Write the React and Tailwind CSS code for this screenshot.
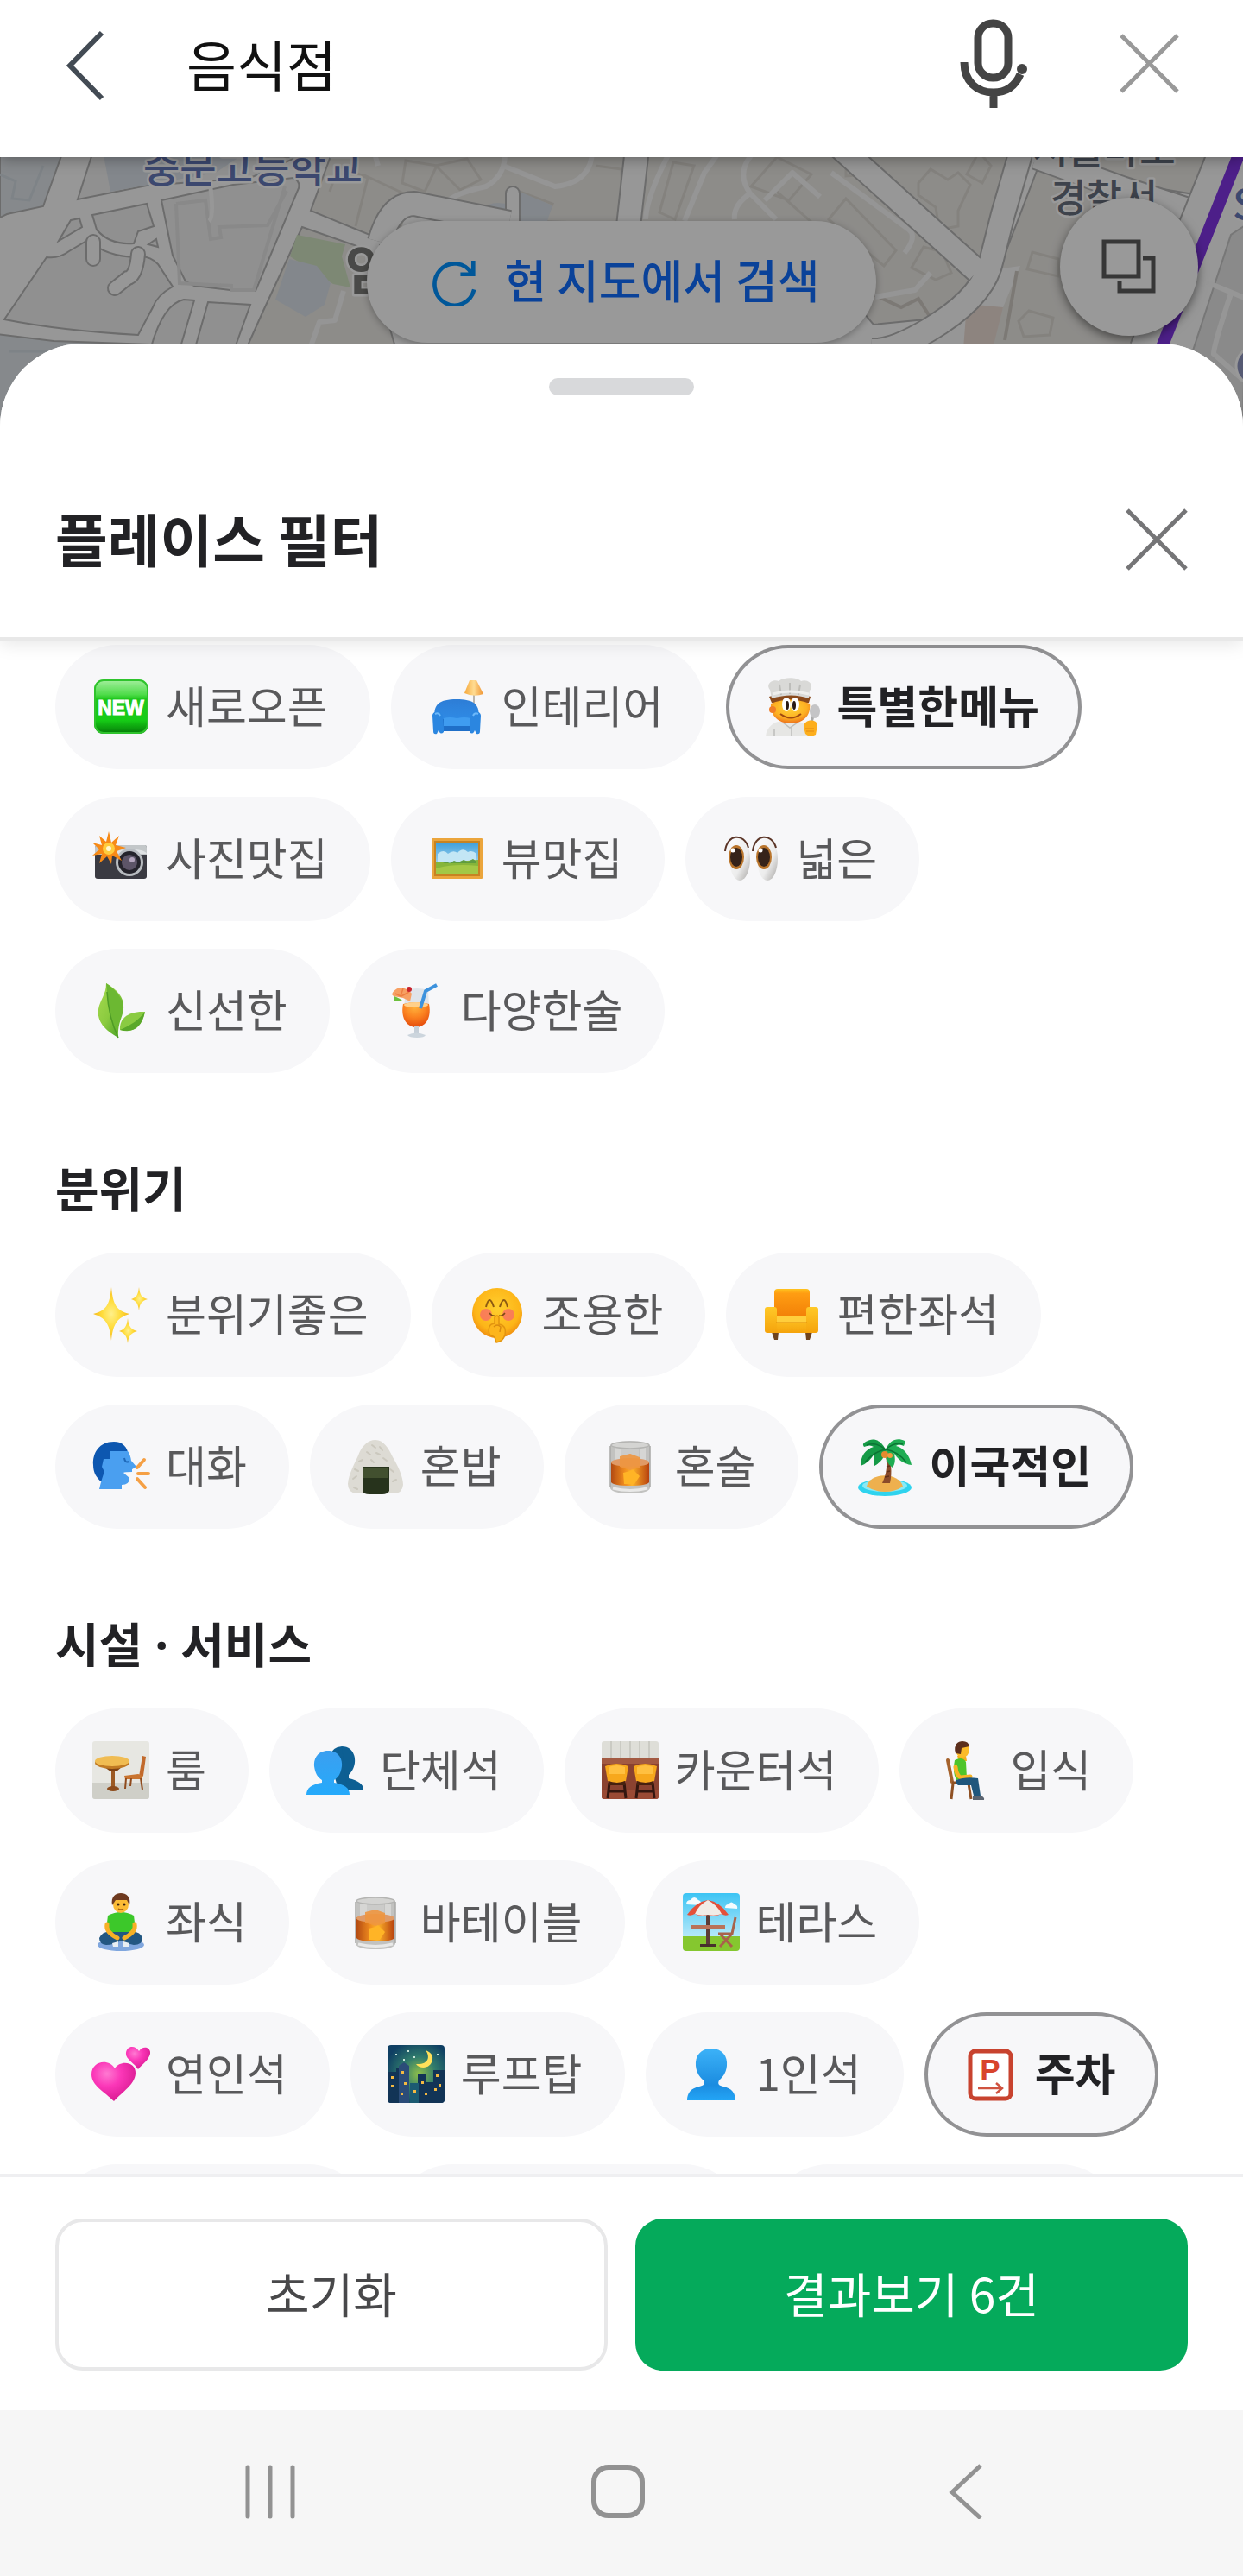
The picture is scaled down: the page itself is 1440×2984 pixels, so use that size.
import { useState } from 'react';

const ICONS = {
  fresh: (
    <>
      <linearGradient id="fresh-bg" x1="0" y1="0" x2="0" y2="1">
        <stop offset="0" stopColor="#a6efa0" />
        <stop offset="0.28" stopColor="#4fdc4a" />
        <stop offset="0.36" stopColor="#1fc81c" />
        <stop offset="0.75" stopColor="#16cc16" />
        <stop offset="1" stopColor="#057a08" />
      </linearGradient>
      <rect x="3" y="2" width="63" height="63" rx="11" fill="url(#fresh-bg)" />
      <rect x="4" y="3" width="61" height="61" rx="10" fill="none" stroke="#2fc32d" strokeWidth="2" />
      <text x="34" y="43" textAnchor="middle" fontFamily="Liberation Sans, sans-serif" fontWeight="700" fontSize="23" fill="#fff" stroke="#fff" strokeWidth="1">NEW</text>
    </>
  ),
  couch: (
    <>
      <linearGradient id="couch-body" x1="0" y1="0" x2="0" y2="1">
        <stop offset="0" stopColor="#2d7dd6" />
        <stop offset="1" stopColor="#2f8fea" />
      </linearGradient>
      <linearGradient id="couch-lamp" x1="0" y1="0" x2="1" y2="0">
        <stop offset="0" stopColor="#f6a83a" />
        <stop offset="0.5" stopColor="#ffdc92" />
        <stop offset="1" stopColor="#ef9330" />
      </linearGradient>
      <path d="M54 18v22" stroke="#b9b4ae" strokeWidth="2" />
      <path d="M49 3h8l8 16q-11 4-22-1z" fill="url(#couch-lamp)" />
      <path d="M9 48C6 31 14 25 34 25s28 6 25 23v8H9z" fill="url(#couch-body)" />
      <path d="M17 48h35v14H17z" fill="#1f6fc8" />
      <path d="M19 47q7-2 15 0v9H19zM35 47q8-2 15 0v9H35z" fill="#3f9cf0" />
      <path d="M6 44c0-6 11-7 12 1l1 13v5q-3 3-5 0l-1-2-2 4q-4 1-4-3zM62 44c0-6-11-7-12 1l-1 13v5q3 3 5 0l1-2 2 4q4 1 4-3z" fill="#2b86e0" />
      <path d="M9 42q4-2 6 2M59 42q-4-2-6 2" stroke="#6cb8fa" strokeWidth="2" fill="none" />
    </>
  ),
  chef: (
    <>
      <radialGradient id="chef-face" cx="0.5" cy="0.35" r="0.65">
        <stop offset="0" stopColor="#ffd63a" />
        <stop offset="0.65" stopColor="#fdb022" />
        <stop offset="1" stopColor="#ec6f1c" />
      </radialGradient>
      <path d="M4 68c1-11 10-17 16-17h22c7 1 11 7 11 17z" fill="#e6e6e4" />
      <path d="M24 52l8 6 9-6M34 58v9M14 60v7" stroke="#bdbdba" strokeWidth="1.5" fill="none" />
      <path d="M8 22q24-8 48 0l-2 7H11z" fill="#8a4a1c" />
      <path d="M10 30q22-9 45 0c2 14-8 23-22 23S9 44 10 30z" fill="url(#chef-face)" />
      <circle cx="12" cy="37" r="4" fill="#f07e28" />
      <ellipse cx="28" cy="31" rx="5" ry="8" fill="#fff" />
      <ellipse cx="38" cy="31" rx="5" ry="8" fill="#fff" />
      <ellipse cx="29" cy="32" rx="2" ry="5" fill="#2a1a12" />
      <ellipse cx="37" cy="32" rx="2" ry="5" fill="#2a1a12" />
      <path d="M21 42q12 9 24 0" stroke="#a04a10" strokeWidth="2" fill="none" />
      <path d="M9 14C3 7 13 1 19 4c6-5 21-5 26 0 8-3 16 4 10 11l-1 9q-20-7-43 0z" fill="#d9d9d7" />
      <path d="M20 8l2 12M32 6v13M44 8l-2 12" stroke="#bdbdba" strokeWidth="2" />
      <path d="M12 19q20-6 42 0" stroke="#efefed" strokeWidth="3" fill="none" />
      <path d="M56 55l4-14" stroke="#a9a9a9" strokeWidth="3" />
      <ellipse cx="61" cy="39" rx="6" ry="8" fill="#c4c4c6" />
      <path d="M48 57c0-9 15-10 16-2l-2 11q-7 4-12-1z" fill="#fdae1c" />
      <path d="M50 59h10M51 62h9" stroke="#e48a12" strokeWidth="1" />
    </>
  ),
  camera: (
    <>
      <rect x="4" y="18" width="60" height="39" rx="3" fill="#3a3a42" />
      <path d="M6 18h56q2 0 2 3v8H4v-8q0-3 2-3z" fill="#c3c7c9" />
      <path d="M26 28c2-7 36-7 38 0z" fill="#dfe2e4" />
      <circle cx="44" cy="38" r="16" fill="#b8bcc0" />
      <circle cx="44" cy="38" r="13" fill="#25242c" />
      <circle cx="44" cy="38" r="9" fill="#5d5568" />
      <circle cx="47" cy="35" r="3" fill="#b4a6be" />
      <path d="M20 2l3 13 9-8-4 11 12 3-11 4 6 11-11-6-1 10-5-9-9 8 3-11-11 2 8-7-8-8 11 3-3-11 8 7z" fill="#f78a16" />
      <circle cx="20" cy="22" r="7" fill="#ffcc3d" />
      <circle cx="20" cy="22" r="3" fill="#fff7cf" />
    </>
  ),
  picture: (
    <>
      <linearGradient id="picture-sky" x1="0" y1="0" x2="0" y2="1">
        <stop offset="0" stopColor="#3f9fdc" />
        <stop offset="1" stopColor="#d5f0f8" />
      </linearGradient>
      <rect x="5" y="10" width="59" height="47" rx="1" fill="#eba53c" />
      <rect x="8" y="13" width="53" height="41" fill="#c78322" />
      <rect x="10" y="15" width="49" height="37" fill="url(#picture-sky)" />
      <path d="M12 28q7-6 12 0 6-5 11-1 6-7 12-1 5-3 10 2v9H12z" fill="#c3e6f5" />
      <path d="M10 37q8 0 14 2 16-3 35-4v17H10z" fill="#86b53a" />
      <path d="M10 45q20-6 49-3v10H10z" fill="#a3c846" />
      <path d="M18 39l4-2 4 2 5-3 5 2 6-3 5 2 6-3 4 3v2H18z" fill="#5f9c40" />
    </>
  ),
  eyes: (
    <>
      <linearGradient id="eyes-ball" x1="0" y1="0" x2="1" y2="1">
        <stop offset="0" stopColor="#fbfbfb" />
        <stop offset="0.6" stopColor="#ececec" />
        <stop offset="1" stopColor="#a7a5a3" />
      </linearGradient>
      {[0, 32].map((x) => (
        <g key={x} transform={`translate(${x} 0)`}>
          <ellipse cx="21" cy="34" rx="12" ry="25" fill="url(#eyes-ball)" />
          <path d="M4 25C6 5 26 3 31 21" stroke="#5b3527" strokeWidth="2" fill="none" />
          <ellipse cx="17" cy="32" rx="9" ry="14" fill="#b9752c" />
          <ellipse cx="17" cy="32" rx="7" ry="11" fill="#35231a" />
          <circle cx="13" cy="24" r="2.5" fill="#fff" />
        </g>
      ))}
    </>
  ),
  leaf: (
    <>
      <linearGradient id="leaf-big" x1="0" y1="0" x2="1" y2="1">
        <stop offset="0" stopColor="#a5d94f" />
        <stop offset="0.5" stopColor="#8bcb3f" />
        <stop offset="1" stopColor="#3f9a22" />
      </linearGradient>
      <path d="M17 2c12 7 21 16 20 28-1 10-9 15-6 35C15 56 6 46 8 32 10 21 17 15 17 2z" fill="url(#leaf-big)" />
      <path d="M18 12c1 18 4 34 13 53-1-20 7-25 6-37C34 16 26 8 17 2z" fill="#6cb832" />
      <path d="M18 12c1 18 4 34 13 53" stroke="#4e9b26" strokeWidth="1.5" fill="none" />
      <path d="M62 35c-4 18-14 25-29 21-1-12 8-22 29-21z" fill="#8acb42" />
      <path d="M62 35c-7 9-15 15-29 21 15 4 25-2 29-21z" fill="#5aa82a" />
    </>
  ),
  cocktail: (
    <>
      <radialGradient id="cocktail-juice" cx="0.45" cy="0.2" r="0.8">
        <stop offset="0" stopColor="#ffb23c" />
        <stop offset="0.5" stopColor="#fb8220" />
        <stop offset="1" stopColor="#e44a0c" />
      </radialGradient>
      <path d="M22 10q13-4 26 0l1 20q-14 3-29 0z" fill="#dfe4ea" />
      <path d="M19 26C12 62 56 62 49 26q-15-4-30 0z" fill="url(#cocktail-juice)" />
      <ellipse cx="34" cy="27" rx="14" ry="3" fill="#ffd08a" />
      <path d="M32 51h5v9h-5z" fill="#c6cfd8" />
      <path d="M24 62q10-5 21 0-1 3-10 3t-11-3z" fill="#ccd5dd" />
      <path d="M39 31l6-20 13-7" stroke="#3d92dd" strokeWidth="4" fill="none" strokeLinejoin="round" />
      <path d="M8 23l1-6q7 3 9 5z" fill="#6cc03d" />
      <path d="M6 15C10 5 22 5 29 14l-2 9-8-4-11-2z" fill="#f7a063" />
      <path d="M10 14l6 3 3-9M17 17l9-5" stroke="#ee7f42" strokeWidth="1.5" fill="none" />
      <circle cx="26" cy="9" r="3" fill="#c8232c" />
    </>
  ),
  sparkles: (
    <>
      <radialGradient id="sparkles-fill">
        <stop offset="0" stopColor="#fff08a" />
        <stop offset="0.5" stopColor="#ffdc3c" />
        <stop offset="1" stopColor="#f5b91d" />
      </radialGradient>
      <path d="M23 2c2 21 6 27 21 31-15 5-19 12-21 31-2-19-6-26-21-31C17 29 21 23 23 2z" fill="url(#sparkles-fill)" />
      <path d="M55 2c1 9 3 12 10 14-7 2-9 5-10 13-1-8-3-11-9-13 6-2 8-5 9-14z" fill="url(#sparkles-fill)" />
      <path d="M42 38c1 10 4 13 11 15-7 2-10 5-11 14-1-9-4-12-10-14 6-2 9-5 10-15z" fill="url(#sparkles-fill)" />
    </>
  ),
  quiet: (
    <>
      <radialGradient id="quiet-face" cx="0.5" cy="0.4" r="0.6">
        <stop offset="0" stopColor="#ffcf2e" />
        <stop offset="0.75" stopColor="#fdb518" />
        <stop offset="1" stopColor="#f08e10" />
      </radialGradient>
      <circle cx="34" cy="32" r="29" fill="url(#quiet-face)" />
      <circle cx="21" cy="34" r="7" fill="#f76a6a" opacity="0.75" />
      <circle cx="47" cy="34" r="7" fill="#f76a6a" opacity="0.75" />
      <path d="M21 25q4-16 9 0M37 25q5-16 9 0" stroke="#8c5a12" strokeWidth="2" fill="none" />
      <path d="M25 32q3 4 7 3M43 32q-3 4-7 3" stroke="#7c4a12" strokeWidth="1.5" fill="none" />
      <path d="M31 60l-6-3q-3-12 6-13v-7q3-4 5 0v8q9 1 7 12-2 8-10 9z" fill="#fdb51c" stroke="#e2940f" strokeWidth="1.5" />
      <path d="M30 48q4-4 8 0l-1 6" stroke="#d98a10" strokeWidth="1.5" fill="none" />
    </>
  ),
  armchair: (
    <>
      <linearGradient id="armchair-back" x1="0" y1="0" x2="0" y2="1">
        <stop offset="0" stopColor="#ffc31f" />
        <stop offset="0.15" stopColor="#ff9d12" />
        <stop offset="1" stopColor="#f07c06" />
      </linearGradient>
      <linearGradient id="armchair-arm" x1="0" y1="0" x2="0" y2="1">
        <stop offset="0" stopColor="#ffc928" />
        <stop offset="1" stopColor="#f5a30c" />
      </linearGradient>
      <path d="M11 54h8l-1 9h-4zM50 54h8l-3 9h-4z" fill="#70431d" />
      <rect x="14" y="4" width="41" height="36" rx="4" fill="url(#armchair-back)" />
      <rect x="12" y="35" width="44" height="20" fill="url(#armchair-arm)" />
      <path d="M17 36h35v7H17z" fill="#ffce3c" />
      <rect x="3" y="25" width="14" height="30" rx="3" fill="url(#armchair-arm)" />
      <rect x="51" y="25" width="14" height="30" rx="3" fill="url(#armchair-arm)" />
      <path d="M16 43h36" stroke="#e08c08" strokeWidth="1" />
    </>
  ),
  talk: (
    <>
      <path d="M26 5C9 5 1 18 2 32c0 9 4 15 9 19l8-2 4-21 20-6C42 11 36 5 26 5z" fill="#0d57b0" />
      <path d="M22 16h20q3 4 4 11l6 7-5 3v3q-9 0-10 1l7 6q0 8-9 8v5H9q3-13 6-20l-3-6 2-9h8z" fill="#4a9ff0" />
      <path d="M38 24q1 6 5 4" stroke="#1d67b8" strokeWidth="2" fill="none" />
      <path d="M53 35l8-9M54 42h12M53 48l9 10" stroke="#f5a045" strokeWidth="4" strokeLinecap="round" />
    </>
  ),
  onigiri: (
    <>
      <path d="M34 3c9 0 15 9 20 20 5 8 12 22 12 32q-1 10-11 10H12Q2 64 2 54c1-12 8-24 12-33C18 10 25 3 34 3z" fill="#dddbd4" />
      <path d="M30 9l4 3m5-1l3 4m-18 2l4 3m7-2l4 2m4 4l4 3m-32 1l4-2m10 0l3 3m-22 8l4 2m37-2l4 3m-47 8l4-3m42 6l4-2m-49 9l4 2" stroke="#cbc8be" strokeWidth="2" strokeLinecap="round" />
      <path d="M19 34h31v28q-2 4-8 4H27q-7 0-8-4z" fill="#27331c" />
      <path d="M20 35h29v12H20z" fill="#42502f" />
    </>
  ),
  whiskey: (
    <>
      <linearGradient id="whiskey-fill" x1="0" y1="0" x2="1" y2="0">
        <stop offset="0" stopColor="#b34a12" />
        <stop offset="0.35" stopColor="#ee8a1e" />
        <stop offset="0.55" stopColor="#ffb52a" />
        <stop offset="1" stopColor="#b7400e" />
      </linearGradient>
      <path d="M11 9q23-9 46 0v50q-3 6-23 6t-23-6z" fill="#c2c2c0" />
      <path d="M16 10h8v45h-8zM45 10h7v45h-7z" fill="#d6d6d4" />
      <path d="M24 8h20v20H24z" fill="#cbcbc9" />
      <path d="M12 28h44v24q-3 4-22 4t-22-4z" fill="url(#whiskey-fill)" />
      <ellipse cx="34" cy="29" rx="22" ry="5" fill="#e09a66" />
      <path d="M22 22l12-3 11 4v12l-11 3-12-4z" fill="#ee963f" opacity="0.9" />
      <path d="M26 41l12-3 7 7-6 9H27z" fill="#ffb426" />
      <path d="M14 59q20 5 40 0" stroke="#e9e9e8" strokeWidth="3" fill="none" />
      <ellipse cx="34" cy="9" rx="22" ry="4" fill="#d4d4d2" stroke="#b4b4b2" strokeWidth="1.5" />
      <path d="M11 10v48M57 10v48" stroke="#a9a9a7" strokeWidth="1.5" />
    </>
  ),
  palm: (
    <>
      <ellipse cx="34" cy="58" rx="31" ry="10" fill="#2fd3ee" />
      <ellipse cx="34" cy="56" rx="26" ry="7" fill="#8beaf5" />
      <path d="M13 57c3-17 38-17 42 0q-9 6-21 6t-21-6z" fill="#eeb04e" />
      <path d="M34 18c4 12 2 25-3 35h9c3-13 1-25-2-35z" fill="#8a4b2a" />
      <path d="M36 28l4-1M36 34l4-1M36 40l4-1M34 46l5-1" stroke="#5f2f18" strokeWidth="1.5" />
      <path d="M35 14C29 2 20 0 12 5q-5 2-2 6 7-3 11 0C11 14 6 22 6 33q11-4 16-15-2 8 0 15 10-5 14-18z" fill="#159a46" />
      <path d="M35 14C40 2 49 0 57 4q1 3-1 6-6-3-9 0c9 2 16 11 18 22-9-1-17-7-21-15 3 7 2 14-1 18-6-4-9-11-8-20z" fill="#1fac52" />
      <path d="M35 14Q24 5 13 9M35 14q10-9 20-6M35 14Q22 16 11 29M35 14q14 2 24 15" stroke="#0b7434" strokeWidth="1.5" fill="none" />
      <circle cx="34" cy="20" r="4" fill="#e58a2f" />
      <circle cx="40" cy="21" r="3" fill="#f09c3d" />
    </>
  ),
  room: (
    <>
      <rect x="1" y="0" width="66" height="67" rx="3" fill="#e7e7e2" />
      <path d="M1 48h66v16q0 3-3 3H4q-3 0-3-3z" fill="#cfcfc8" />
      <path d="M23 28h4v26h-4z" fill="#9c5a24" />
      <path d="M15 30h20l-6 5h-7z" fill="#7e4215" />
      <ellipse cx="25" cy="55" rx="7" ry="3" fill="#8d4c1c" />
      <ellipse cx="24" cy="25" rx="20" ry="7" fill="#c07a24" />
      <ellipse cx="24" cy="23" rx="20" ry="6" fill="#f0bc52" />
      <path d="M59 17l4 1-3 22-5 1z" fill="#c26a2c" />
      <path d="M38 40l16-2 6 2-3 4H39z" fill="#c9742f" />
      <path d="M40 43l-1 12M46 43l-1 9M57 43l2 13" stroke="#8f4a1c" strokeWidth="2" />
    </>
  ),
  group: (
    <>
      <linearGradient id="group-front" x1="0" y1="0" x2="0" y2="1">
        <stop offset="0" stopColor="#3b9ff0" />
        <stop offset="1" stopColor="#25aafb" />
      </linearGradient>
      <path d="M42 6c11 0 16 9 15 19-1 7-4 11-7 14v4q17 4 17 13H38z" fill="#0d5f93" />
      <path d="M42 6q-14 1-14 16l10 34h10z" fill="#0d5f93" />
      <path d="M26 11c11 0 17 8 16 18-1 8-4 13-9 16v3c12 2 18 6 18 14H1c0-8 6-12 18-14v-3c-5-3-8-8-9-16-1-10 5-18 16-18z" fill="url(#group-front)" />
    </>
  ),
  counter: (
    <>
      <path d="M4 0h60q3 0 3 3v18H1V3q0-3 3-3z" fill="#deded8" />
      <path d="M12 0v20M23 0v20M34 0v20M45 0v20M56 0v20" stroke="#c4c4bc" strokeWidth="1.5" />
      <path d="M1 21h66v43q0 3-3 3H4q-3 0-3-3z" fill="#8a4230" />
      <path d="M1 20h66v6H1z" fill="#a35a42" />
      <path d="M1 56h66v8q0 3-3 3H4q-3 0-3-3z" fill="#9a4a34" />
      {[0, 33].map((x) => (
        <g key={x} transform={`translate(${x} 0)`}>
          <path d="M10 48l-2 18M27 48l2 18M9 58h19" stroke="#33160f" strokeWidth="3" />
          <path d="M5 29q13-6 27 0l-3 17q-10 4-21 0z" fill="#f7a81c" />
          <path d="M9 30q10-4 19 0v8H9z" fill="#ffc040" />
          <path d="M9 46q10 4 19 0v5H9z" fill="#47210f" />
        </g>
      ))}
    </>
  ),
  sit: (
    <>
      <path d="M14 22l5 25" stroke="#a5622c" strokeWidth="4" strokeLinecap="round" />
      <path d="M19 48h22M20 49l-2 18M38 49l3 18" stroke="#8f5124" strokeWidth="3" />
      <path d="M25 17h10l1 6h-9z" fill="#f5ad1c" />
      <path d="M22 22q9-5 13 2l1 19-12 2q-5-9-2-23z" fill="#4fc42a" />
      <path d="M23 30q1 10 6 12l11-1" stroke="#f7b425" strokeWidth="5" fill="none" strokeLinecap="round" />
      <path d="M24 45q10-4 25-2l3 20h-8l-3-12H26q-3-2-2-6z" fill="#1f567c" />
      <path d="M43 63h9q5 2 4 5H43z" fill="#5b6470" />
      <ellipse cx="31" cy="10" rx="8" ry="9" fill="#fbbb29" />
      <path d="M23 14C20 4 26 0 31 0q7 0 8 6l-9 2-1 7z" fill="#5c2f1d" />
    </>
  ),
  floor: (
    <>
      <ellipse cx="34" cy="60" rx="27" ry="7" fill="#7fa6de" />
      <path d="M19 26q15-8 30 0l2 16-6 8H23l-6-8z" fill="#3cc82a" />
      <path d="M9 52q4-9 15-7l20 0q12-2 15 7 0 8-10 8-8-1-15-5-8 5-17 5-8-1-8-8z" fill="#235782" />
      <path d="M18 36q-2 9 12 16M50 36q2 9-12 16" stroke="#f7b026" strokeWidth="5" fill="none" strokeLinecap="round" />
      <path d="M24 58l7-2v6h-6zM37 56l7 2-1 4h-6z" fill="#e9eef3" />
      <ellipse cx="34" cy="13" rx="9" ry="10" fill="#fbbb35" />
      <path d="M24 14C22 4 28 0 34 0s12 4 10 14l-3-6H28z" fill="#6e3a20" />
      <circle cx="31" cy="13" r="1.5" fill="#3a2112" />
      <circle cx="38" cy="13" r="1.5" fill="#3a2112" />
      <path d="M31 18q3 2 6 0" stroke="#a25a12" strokeWidth="1.5" fill="none" />
    </>
  ),
  terrace: (
    <>
      <linearGradient id="terrace-sky" x1="0" y1="0" x2="0" y2="1">
        <stop offset="0" stopColor="#3cc4f4" />
        <stop offset="1" stopColor="#def5fb" />
      </linearGradient>
      <rect x="1" y="0" width="66" height="67" rx="4" fill="url(#terrace-sky)" />
      <path d="M1 50h66v13q0 4-4 4H5q-4 0-4-4z" fill="#85c72f" />
      <path d="M5 13q0-5 5-5 4-6 9 0 4 1 3 6zM50 17q0-4 4-4 3-5 7 0 4 1 3 5z" fill="#f5fbfe" />
      <path d="M28 18h4v43h-4z" fill="#5c3d38" />
      <path d="M6 25Q16 10 30 8q14 2 24 17-4 2-8-1-8 4-16 1-8 3-15-1-5 3-9 1z" fill="#e4503a" />
      <path d="M15 24q4-10 15-16 11 6 16 16-8 3-16 1-8 2-15-1z" fill="#f1ece7" />
      <path d="M10 37h40v4H10z" fill="#b9735a" />
      <path d="M62 28l-4 19H42M44 47l14 15M58 47L44 62" stroke="#a8634a" strokeWidth="3" fill="none" />
      <path d="M21 59h18v3H21z" fill="#47312c" />
    </>
  ),
  hearts: (
    <>
      <radialGradient id="hearts-fill" cx="0.35" cy="0.3" r="0.8">
        <stop offset="0" stopColor="#ff7ad2" />
        <stop offset="0.4" stopColor="#fb37b8" />
        <stop offset="1" stopColor="#d3168b" />
      </radialGradient>
      <path d="M26 65C15 54 0 47 0 34 0 18 20 15 27 27c6-10 25-8 24 6-1 13-15 21-25 32z" fill="url(#hearts-fill)" />
      <path d="M54 28c-4-7-15-12-14-19C41 0 51 0 55 7c4-7 14-5 13 3-2 8-9 12-14 18z" fill="url(#hearts-fill)" />
    </>
  ),
  rooftop: (
    <>
      <radialGradient id="rooftop-sky" cx="0.55" cy="0.5" r="0.6">
        <stop offset="0" stopColor="#8fc04a" />
        <stop offset="0.5" stopColor="#2f7a6c" />
        <stop offset="1" stopColor="#0f3f63" />
      </radialGradient>
      <rect x="1" y="0" width="66" height="67" rx="4" fill="url(#rooftop-sky)" />
      <path d="M45 6c6 8 3 17-11 16 4 6 18 6 19-6 1-5-3-8-8-10z" fill="#ffe05a" />
      <path d="M1 31h10v-5h9v10h6v31H5q-4 0-4-4zM36 34h10v9h8V29h13v34q0 4-4 4H36z" fill="#123456" />
      <path d="M14 24l6-4 6 4v43H14z" fill="#2b4c78" />
      <path d="M27 44h10v23H27z" fill="#1c5b72" />
      <path d="M5 36h3v3H5zM5 46h3v3H5zM17 30h3v3h-3zM20 43h3v3h-3zM16 55h3v3h-3zM40 42h3v3h-3zM57 34h3v3h-3zM60 45h3v3h-3zM55 50h3v3h-3zM44 55h3v3h-3zM31 52h3v3h-3z" fill="#f4b942" />
      <path d="M10 10h2v2h-2zM24 6h2v2h-2zM31 13h2v2h-2zM58 10h2v2h-2zM19 16h2v2h-2z" fill="#c8e4d8" />
    </>
  ),
  single: (
    <>
      <linearGradient id="single-fill" x1="0" y1="0" x2="0" y2="1">
        <stop offset="0" stopColor="#3cb2f8" />
        <stop offset="0.7" stopColor="#1b8ce0" />
        <stop offset="1" stopColor="#23a5f6" />
      </linearGradient>
      <path d="M34 4c13 0 19 9 18 20-1 9-5 13-9 17-2 4 0 6 5 7 10 2 14 8 14 16H6c0-8 4-14 14-16 5-1 7-3 5-7-4-4-8-8-9-17C15 13 21 4 34 4z" fill="url(#single-fill)" />
    </>
  ),
  parking: (
    <>
      <rect x="11" y="7" width="47" height="55" rx="6" fill="#fff" stroke="#c8432f" strokeWidth="5" />
      <text x="34" y="41" textAnchor="middle" fontFamily="Liberation Sans, sans-serif" fontWeight="700" fontSize="35" fill="#d8432c">P</text>
      <path d="M20 50h28M41 44l7 6-7 6" stroke="#cf5340" strokeWidth="2.5" fill="none" />
    </>
  ),
};

const SECTIONS = [
  {
    title: null,
    chips: [
      { icon: 'fresh', label: '새로오픈' },
      { icon: 'couch', label: '인테리어' },
      { icon: 'chef', label: '특별한메뉴' },
      { icon: 'camera', label: '사진맛집' },
      { icon: 'picture', label: '뷰맛집' },
      { icon: 'eyes', label: '넓은' },
      { icon: 'leaf', label: '신선한' },
      { icon: 'cocktail', label: '다양한술' },
    ],
  },
  {
    title: '분위기',
    chips: [
      { icon: 'sparkles', label: '분위기좋은' },
      { icon: 'quiet', label: '조용한' },
      { icon: 'armchair', label: '편한좌석' },
      { icon: 'talk', label: '대화' },
      { icon: 'onigiri', label: '혼밥' },
      { icon: 'whiskey', label: '혼술' },
      { icon: 'palm', label: '이국적인' },
    ],
  },
  {
    title: '시설 · 서비스',
    chips: [
      { icon: 'room', label: '룸' },
      { icon: 'group', label: '단체석' },
      { icon: 'counter', label: '카운터석' },
      { icon: 'sit', label: '입식' },
      { icon: 'floor', label: '좌식' },
      { icon: 'whiskey', label: '바테이블' },
      { icon: 'terrace', label: '테라스' },
      { icon: 'hearts', label: '연인석' },
      { icon: 'rooftop', label: '루프탑' },
      { icon: 'single', label: '1인석' },
      { icon: 'parking', label: '주차' },
      { icon: null, label: '유아의자' },
      { icon: null, label: '무선인터넷' },
      { icon: null, label: '남녀화장실' },
    ],
  },
];

function Chip({ icon, label, active, onClick }) {
  return (
    <button
      type="button"
      aria-pressed={active}
      onClick={onClick}
      className={`flex h-36 items-center gap-[18px] rounded-full bg-[#f7f7f9] pl-[42px] pr-[49px] text-[51px] cursor-pointer ${active ? 'font-bold text-[#222225] ring-4 ring-inset ring-[#929294]' : 'text-[#59595b]'}`}
    >
      <svg viewBox="0 0 68 68" className="size-[68px] flex-shrink-0" aria-hidden="true">{icon && ICONS[icon]}</svg>
      <span className="pb-1.5">{label}</span>
    </button>
  );
}

function SearchHeader() {
  return (
    <header className="relative z-10 flex h-[182px] flex-shrink-0 items-start bg-white pl-16 pr-[68px] shadow-[0_2px_16px_rgba(0,0,0,0.35)]">
      <button type="button" aria-label="뒤로" className="mt-8 cursor-pointer">
        <svg viewBox="0 0 72 88" className="h-[88px] w-[72px]" fill="none" stroke="#434b54" strokeWidth="6">
          <path d="M54 6L17 44l37 38" />
        </svg>
      </button>
      <input type="text" aria-label="검색어" defaultValue="음식점" className="ml-20 mt-4 h-28 min-w-0 flex-1 bg-transparent text-[63px] text-[#111] outline-none" />
      <button type="button" aria-label="음성 검색" className="mt-[18px] cursor-pointer">
        <svg viewBox="0 0 84 108" className="h-[108px] w-[84px]" fill="none" stroke="#444" strokeWidth="9">
          <rect x="21" y="9" width="35" height="63" rx="17" />
          <path d="M5 54c0 23 15 35 34 35 14 0 25-7 31-21M39 89v18" />
          <circle cx="72" cy="62" r="6" fill="#444" stroke="none" />
        </svg>
      </button>
      <button type="button" aria-label="검색어 지우기" className="ml-[92px] mt-8 cursor-pointer">
        <svg viewBox="0 0 84 84" className="size-[84px]" fill="none" stroke="#999" strokeWidth="5">
          <path d="M11 9l65 65M76 9L11 74" />
        </svg>
      </button>
    </header>
  );
}

function MapArt() {
  return (
    <svg viewBox="0 0 1440 312" preserveAspectRatio="xMidYMin slice" className="h-full w-full" aria-hidden="true">
      <rect width="1440" height="312" fill="#fcfcfc" />
      {/* blocks west of the main road */}
      <g fill="#f0f0f0" stroke="#b4b4b4" strokeWidth="2">
        <path d="M0-4h72L50 57 8 66l-8 4z" fill="#dfe5ea" />
        <path d="M107-4L90 49l80-16 120-9 54-24z" />
        <path d="M187 50l83-18 70-8q8 4 6 12l-50 119h-21l-50-6-10-5-15-30z" />
        <path d="M107 67l63-13 8 26-18 6-5 14q-28 2-43-16z" />
        <path d="M82 73l10-2 3 10-27 16z" />
        <path d="M172 101l9-6 2 9z" />
        <path d="M5 188l49-72q14 2 26-7l22-13q20 19 56 20 14-3 25 8l17 26q-18 10-23 24l-17 32q-90-5-155-18z" />
        <path d="M-4 205l66 8 112 4 6 100H-4z" fill="#dfe5ea" />
        <path d="M213 165l12 1-16 54h-34q14-50 38-55zM241 168l49 3-18 50h-46z" />
        <path d="M350 81l75 26 35 120H283l22-49z" fill="#ebe9e5" />
      </g>
      <path d="M120-2h160l-30 20-122 22z" fill="#dbe2e9" />
      <path d="M344 90l56 11-4 14 10 36-20-4-50-32z" fill="#d0e3c2" />
      <path d="M335 118l32 8 16 20-7 25-22 14-35-20z" fill="#dbe2e9" />
      <path d="M108 98v20M160 112q-2 26-12 28l-15 12" stroke="#b4b4b4" strokeWidth="18" strokeLinecap="round" fill="none" />
      <path d="M108 98v20M160 112q-2 26-12 28l-15 12" stroke="#fcfcfc" strokeWidth="14" strokeLinecap="round" fill="none" />
      <path d="M204 54l34-4 6 45 12-2-2-12 56-2 22-40M204 54l4 92 60 3v5h26l36-120" fill="none" stroke="#e4e4e4" strokeWidth="4" />
      <path d="M244 36q4 34-2 38" stroke="#fcfcfc" strokeWidth="5" fill="none" />
      <path d="M0 20l18 8-4 20 20 2 16-40M10 225h50v20h40" fill="none" stroke="#d2dae1" strokeWidth="3" />

      {/* central blocks */}
      <g fill="#ebe9e5" stroke="#b4b4b4" strokeWidth="2">
        <path d="M384-4h348l-6 80-136-2-110-22q-12-4-22 12l-20 30-78-32z" />
        <path d="M742-4h232l164 128-18 30-48 34-60 6-100-118H738z" />
        <path d="M995-4h172l-13 74-16 54z" />
        <path d="M1186-4h230l-15 50-60-10-80-20h-60l-42 110-20 50-62 50h266l50-170" />
      </g>
      <path d="M1140 132l42-6-40 96h-70z" fill="#fafafa" />
      <path d="M1120 170l42 4-12 48h-34z" fill="#ecdcd4" />
      <g fill="none" stroke="#dcd9d3" strokeWidth="3">
        <path d="M382 40l10-30 34 14-14 56M420 20l56 26-14 40M470 4l36 6-14 30-26-10zM505 10l36-8 16 24-24 12zM602 40l38 14-10 20M690 10l30 4v20" />
        <path d="M780 6l24 4-22 62-18-8zM870 34l30-34 40 20-26 30zM980 0h28v20l-28 2zM1064 30l14-16 20 12 12-8 14 14-14 30v18l-22 4-4-26-20-14zM1120 20l14-26 14 16-10 20zM900 40l50 44M960 72l20-24 58 60-14 18zM1056 128l14-24 22 6 10 24-18 8zM1190 130l6-20 30 8v20zM1180 190l12-12 28 8-4 20-30 2z" />
        <path d="M1014 160l30 14 20-10 14 22M1178 132l-14 80" stroke="#cfcac3" strokeWidth="4" />
      </g>
      <path d="M556 62q14-14 36-6l-4 14h-34zM602 40l38 16-6 18h-32z" fill="#dbe2e9" />
      <g fill="none" stroke="#f8f8f8" strokeWidth="6" strokeLinejoin="round">
        <path d="M585-4q0 26-22 38-46 10-49 24M583 10l60 24q40-4 43-38M434-4l4 14M398 155l-10 34-18 2-12 34" />
        <path d="M775-4q-26 50-27 76M832-4l-16 22-23 56M872-4q-20 22-3 46l30 30M869 42q-20 14-18 30M886 50l32-32 32 28M963 18l90 66q10 8-5 27M1014 162l46-8 18-20" />
      </g>
      <path d="M594 80V42" stroke="#b4b4b4" strokeWidth="18" strokeLinecap="round" />
      <path d="M594 80V42" stroke="#fcfcfc" strokeWidth="14" strokeLinecap="round" />
      <g fill="none" strokeLinejoin="round">
        <path d="M738-10l-10 90M968-16l164 148M1184-10l-22 76-13 52q-8 40-60 74t-80 32M1200 0l100 36 110 36" stroke="#b4b4b4" strokeWidth="30" />
        <path d="M440 98q12-44 40-44l110 22" stroke="#b4b4b4" strokeWidth="30" />
        <path d="M440 98q12-44 40-44l110 22" stroke="#fcfcfc" strokeWidth="26" />
        <path d="M738-10l-10 90M968-16l164 148M1184-10l-22 76-13 52q-8 40-60 74t-80 32M1200 0l100 36 110 36" stroke="#fcfcfc" strokeWidth="26" />
        <path d="M1446-20l-100 250" stroke="#b4b4b4" strokeWidth="80" />
        <path d="M1446-20l-100 250" stroke="#fcfcfc" strokeWidth="76" />
      </g>
      <path d="M1444 78l-18 12-46 140 60 82z" fill="#e6e6e6" stroke="#c6c6c6" strokeWidth="2" />
      <path d="M1398 145l44 18M1426 158q-20 60-20 70l34 30" stroke="#fafafa" strokeWidth="6" fill="none" />
      <path d="M1442-20l-100 250" stroke="#8035e4" strokeWidth="14" />
      <circle cx="1454" cy="242" r="22" fill="#8f96c0" stroke="#fff" strokeWidth="3" />

      <g fontFamily="'Noto Sans CJK KR', sans-serif" fontWeight="500" stroke="#fff" strokeWidth="5" strokeLinejoin="round" style={{ paintOrder: 'stroke' }}>
        <text x="166" y="29" fontSize="46" fill="#6579ba">중문고등학교</text>
        <text x="400" y="154" fontSize="62" fontWeight="700" fill="#7b7b78">암</text>
        <text x="1196" y="8" fontSize="45" fill="#68707f">서울마포</text>
        <text x="1217" y="64" fontSize="45" fill="#68707f">경찰서</text>
        <text x="1428" y="72" fontSize="48" fill="#6579ba">S</text>
      </g>
    </svg>
  );
}

function MapArea() {
  return (
    <div className="relative h-[312px] flex-shrink-0 overflow-hidden">
      <MapArt />
      <button type="button" className="absolute left-1/2 top-[74px] flex h-[141px] w-[590px] -translate-x-1/2 items-center justify-center gap-8 rounded-full bg-white pl-2.5 text-[53px] font-medium text-[#126eff] shadow-[0_2px_8px_rgba(0,0,0,0.3)] cursor-pointer">
        <svg viewBox="0 0 56 60" className="h-14 w-[52px]" fill="none" stroke="#0091ff" strokeWidth="5">
          <path d="M53 39a25 26 0 1 1-3-20M52 3v17H36" />
        </svg>
        <span className="pb-1.5">현 지도에서 검색</span>
      </button>
      <button type="button" aria-label="지도 겹쳐보기" className="absolute right-[52px] top-[47px] flex size-40 items-center justify-center rounded-full bg-white shadow-[0_4px_12px_rgba(0,0,0,0.5)] cursor-pointer">
        <svg viewBox="0 0 66 66" className="size-[66px]" fill="none" stroke="#5c5c5c" strokeWidth="5">
          <path d="M4 4h40v40H4zM49 23h12v38H22V49" />
        </svg>
      </button>
      <div className="pointer-events-none absolute inset-0 bg-black/40" />
    </div>
  );
}

function NavBar() {
  return (
    <nav className="flex h-48 flex-shrink-0 items-center justify-around bg-[#f6f6f6] pb-1 pl-[111px] pr-[119px]">
      <button type="button" aria-label="최근 앱" className="cursor-pointer">
        <svg viewBox="0 0 64 64" className="size-16" stroke="#929292" strokeWidth="5" strokeLinecap="round">
          <path d="M6 4v57M32 4v57M58 4v57" />
        </svg>
      </button>
      <button type="button" aria-label="홈" className="cursor-pointer">
        <svg viewBox="0 0 64 64" className="size-16" fill="none" stroke="#929292" strokeWidth="6">
          <rect x="4" y="4" width="56" height="56" rx="17" />
        </svg>
      </button>
      <button type="button" aria-label="이전" className="cursor-pointer">
        <svg viewBox="0 0 64 64" className="size-16" fill="none" stroke="#929292" strokeWidth="5">
          <path d="M49 2L16 33l33 30" />
        </svg>
      </button>
    </nav>
  );
}

export default function App() {
  const [selected, setSelected] = useState(['특별한메뉴', '이국적인', '주차']);

  const toggle = (label) => {
    setSelected((prev) => (prev.includes(label) ? prev.filter((l) => l !== label) : [...prev, label]));
  };

  return (
    <div className="flex h-screen flex-col overflow-hidden bg-white font-['Noto_Sans_CJK_KR',sans-serif]">
      <SearchHeader />
      <MapArea />

      <section className="relative -mt-24 flex min-h-0 flex-1 flex-col overflow-hidden rounded-t-[96px] bg-white">
        <div className="relative z-10 flex-shrink-0 border-b-4 border-[#e8e8e8] bg-white px-16 pt-10 shadow-[0_4px_20px_rgba(0,0,0,0.1)]">
          <div className="mx-auto h-5 w-[168px] rounded-full bg-[#d8d9db]" />
          <div className="flex items-center justify-between pb-[49px] pt-[103px]">
            <h1 className="pb-1.5 text-[66px] leading-[122px] font-bold text-[#222225]">플레이스 필터</h1>
            <button type="button" aria-label="닫기" className="cursor-pointer">
              <svg viewBox="0 0 72 72" className="size-[72px]" fill="none" stroke="#757577" strokeWidth="5">
                <path d="M2 2l68 68M70 2L2 70" />
              </svg>
            </button>
          </div>
        </div>

        <div className="min-h-0 flex-1 overflow-hidden px-16 pt-[5px]">
          {SECTIONS.map((section) => (
            <div key={section.title ?? 'feature'}>
              {section.title && <h2 className="mb-[42px] mt-[102px] font-['Noto_Sans','Noto_Sans_CJK_KR',sans-serif] text-[55px] leading-[64px] font-bold text-[#222225]">{section.title}</h2>}
              <div className="flex flex-wrap gap-x-6 gap-y-8">
                {section.chips.map((chip) => (
                  <Chip key={chip.label} {...chip} active={selected.includes(chip.label)} onClick={() => toggle(chip.label)} />
                ))}
              </div>
            </div>
          ))}
        </div>

        <div className="grid flex-shrink-0 grid-cols-2 gap-8 border-t-4 border-[#efeff1] bg-white px-16 pb-[46px] pt-12 text-[55px]">
          <button type="button" onClick={() => setSelected([])} className="h-44 rounded-[32px] border-4 border-[#e8e8e9] pb-1.5 text-[#48484a] cursor-pointer">초기화</button>
          <button type="button" className="h-44 rounded-[32px] bg-[#05aa5b] pb-1.5 text-white cursor-pointer">결과보기 6건</button>
        </div>
      </section>

      <NavBar />
    </div>
  );
}
